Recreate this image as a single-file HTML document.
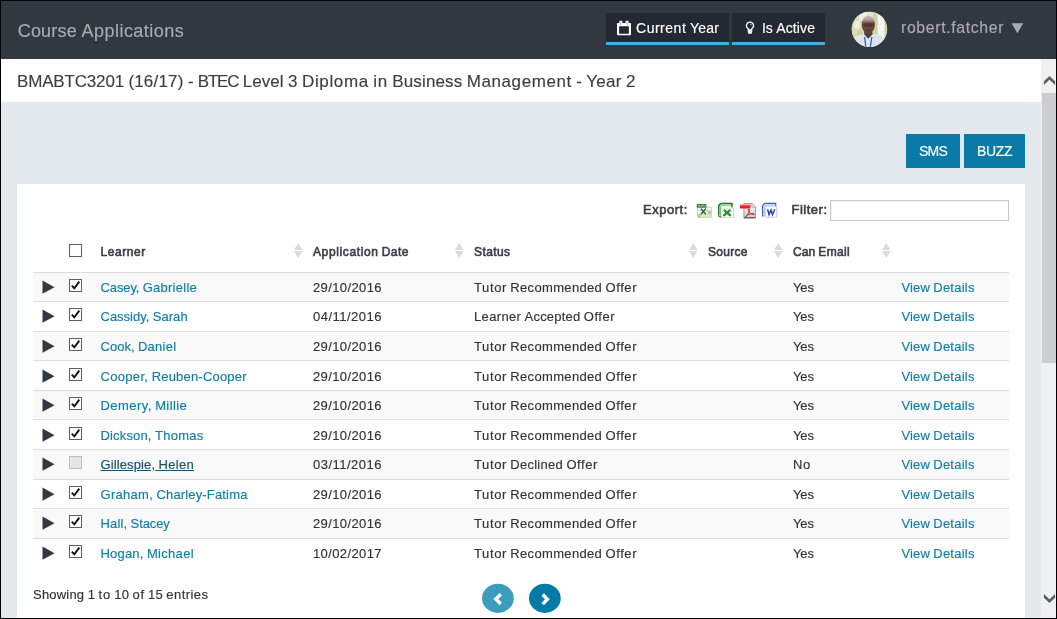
<!DOCTYPE html>
<html lang="en">
<head>
<meta charset="utf-8">
<title>Course Applications</title>
<style>
*{box-sizing:border-box;margin:0;padding:0}
html,body{width:1057px;height:619px;overflow:hidden;background:#e4e9ed}
body{position:relative;font-family:"Liberation Sans", sans-serif;font-size:13px;color:#333;}
#app{position:absolute;left:0;top:0;width:1057px;height:619px;overflow:hidden;will-change:transform}
.abs{position:absolute}
.t{position:absolute;white-space:nowrap;line-height:20px;height:20px;-webkit-text-stroke:0.15px}
#hdr{left:0;top:0;width:1057px;height:59px;background:#323840}
#band{left:0;top:59px;width:1041px;height:43px;background:#fff}
#card{left:17px;top:184px;width:1008px;height:440px;background:#fff}
#sb{left:1041px;top:59px;width:15px;height:560px;background:#f0f0f0}
#thumb{left:1042px;top:93px;width:14px;height:270px;background:#cdcdcd}
.frame{background:#000}
.hbtn{top:13px;height:32px;background:#232933;border-bottom:3px solid #38b0e2}
.btn{top:134px;height:34px;background:#0a7ba7}
.white{color:#fff}
.b{font-weight:400;-webkit-text-stroke:0.6px}
.row{left:33px;width:976px;border-top:1px solid #ddd}
.odd{background:#f9f9f9}
.lnk{color:#0f7ea8}
.cb{left:69px;width:13px;height:13px;border:1px solid #5f5f5f;background:#fff}
.tri{left:42px;width:0;height:0;border-left:12px solid #303843;border-top:6.6px solid transparent;border-bottom:6.6px solid transparent}
</style>
</head>
<body>
<div id="app">
<div id="hdr" class="abs"></div>
<div id="band" class="abs"></div>
<div id="card" class="abs"></div>
<div id="sb" class="abs"></div>
<div id="thumb" class="abs"></div>
<div class="abs hbtn" style="left:606px;width:123px"></div>
<div class="abs hbtn" style="left:732px;width:93px"></div>
<svg class="abs" style="left:1010px;top:22px" width="15" height="13" viewBox="1010 22 15 13"><path d="M1011.5 23.2H1023.3L1017.4 33.3z" fill="#a9abad"/></svg>
<svg class="abs" style="left:851px;top:11px" width="37" height="37" viewBox="0 0 37 37"><defs><clipPath id="av"><circle cx="18.45" cy="18.35" r="17.7"/></clipPath><linearGradient id="hd" x1="0" y1="0" x2="0" y2="1"><stop offset="0" stop-color="#cfc4c2"/><stop offset="0.22" stop-color="#b3a19d"/><stop offset="0.42" stop-color="#6e4f45"/><stop offset="1" stop-color="#62443a"/></linearGradient><filter id="bl" x="-20%" y="-20%" width="140%" height="140%"><feGaussianBlur stdDeviation="0.7"/></filter><filter id="bl2" x="-20%" y="-20%" width="140%" height="140%"><feGaussianBlur stdDeviation="0.35"/></filter></defs><g clip-path="url(#av)"><rect width="37" height="37" fill="#e4e6cc"/><g filter="url(#bl)"><rect x="-2" y="-2" width="14" height="30" fill="#dadeb4"/><ellipse cx="6" cy="14" rx="3" ry="4" fill="#eef0dc"/><ellipse cx="9" cy="22" rx="3" ry="3" fill="#c9d19c"/><rect x="8" y="-2" width="8" height="12" fill="#f1f0e6"/><rect x="22" y="-2" width="5" height="30" fill="#ccd3a4"/><rect x="26.6" y="-2" width="7" height="41" fill="#f4f4f4"/><rect x="33.6" y="-2" width="5" height="41" fill="#cdd4a0"/><path d="M-2 39V30C3 26 9 24 12 23L25 23C29 24 34 27 39 31V39z" fill="#dfe3ee"/><path d="M13 23L17.200 27.800 21.800 23 21 20 13.500 20z" fill="#4a3d44"/><ellipse cx="17.300" cy="13.600" rx="6.700" ry="9.200" fill="url(#hd)"/><ellipse cx="17.500" cy="14" rx="5.400" ry="1.900" fill="#432a25" opacity="0.6"/><ellipse cx="17.600" cy="19.600" rx="2.400" ry="1" fill="#5a2f2c" opacity="0.7"/></g><g filter="url(#bl2)"><path d="M13.6 26L15 37M20.8 26L19.2 37" stroke="#2a62c8" stroke-width="1.3" fill="none"/></g></g></svg>
<svg class="abs" style="left:617px;top:20px" width="14" height="16" viewBox="0 0 14 16"><path fill-rule="evenodd" d="M0.8 2.9h12.4a.8.8 0 0 1 .8.8v10.7a.8.8 0 0 1-.8.8H.8a.8.8 0 0 1-.8-.8V3.7a.8.8 0 0 1 .8-.8zM2.1 6.2v7.5h9.8V6.2z" fill="#fff"/><rect x="2.3" y="0.8" width="3.1" height="3" rx="1" fill="#fff"/><rect x="8.5" y="0.8" width="3.1" height="3" rx="1" fill="#fff"/><rect x="3.1" y="2.4" width="1.5" height="2.4" fill="#b4b6b9"/><rect x="9.3" y="2.4" width="1.5" height="2.4" fill="#b4b6b9"/></svg>
<svg class="abs" style="left:745px;top:21px" width="10" height="14" viewBox="0 0 10 14"><path d="M5 1.1a3.5 3.5 0 0 0-2 6.4c.4.4.6.9.6 1.4h2.8c0-.5.2-1 .6-1.4A3.5 3.5 0 0 0 5 1.100z" fill="none" stroke="#fff" stroke-width="1.25"/><path d="M2.7 8.4h4.6v2.6a2.3 2.0 0 0 1-4.6 0z" fill="#fff"/><path d="M5.2 3.1a1.7 1.7 0 0 1 1.5 1.3" fill="none" stroke="#fff" stroke-width="0.7"/></svg>
<div class="abs btn" style="left:906px;width:54px"></div>
<div class="abs btn" style="left:964px;width:61px"></div>
<div class="abs" style="left:830px;top:200px;width:179px;height:21px;border:1px solid #c8c8c8;background:#fff;box-shadow:inset 1px 1px 0 #f3f3f3"></div>
<svg class="abs" style="left:696px;top:202px" width="17" height="17" viewBox="0 0 17 17"><rect x="1.7" y="5.3" width="13.6" height="10.2" fill="#fbfdf8" stroke="#a9cc9a" stroke-width="0.7"/><path d="M1.7 8.7h13.6M1.7 12h13.6M5 5.3v10.2M11.2 5.300v10.200" stroke="#b9d9ab" stroke-width="0.7"/><rect x="11.5" y="8.9" width="3.5" height="2.8" fill="#a5d092"/><rect x="11.5" y="12.300" width="3.5" height="2.800" fill="#cfe6c4"/><rect x="2" y="12.3" width="2.8" height="2.8" fill="#a5d092"/><rect x="5.300" y="12.300" width="5.600" height="2.800" fill="#d9ecd0"/><rect x="0.8" y="2.200" width="9.600" height="3.300" fill="#1d4f16"/><path d="M1.800 3.100h2.200v1.500h-2.200zM4.600 3.100h2.200v1.500h-2.200zM7.400 3.100h2.200v1.500h-2.200z" fill="#e9f3e4"/><path d="M2.400 3.600h1M5.200 3.600h1M8 3.600h1" stroke="#1d4f16" stroke-width="0.700"/><path d="M5 6.600L9.800 12.400M9.800 6.600L5 12.400" stroke="#1f5c18" stroke-width="1.400"/></svg>
<svg class="abs" style="left:718px;top:202px" width="17" height="17" viewBox="0 0 17 17"><path d="M0.700 13.600V5.200Q0.700 1.500 4.400 1.500H13.900V5.400" fill="#fff" stroke="#1f7a22" stroke-width="1.500"/><path d="M0.700 13.600Q0.700 14.800 2.200 14.800H4" fill="none" stroke="#1f7a22" stroke-width="1.200"/><path d="M2.400 14V5.700Q2.400 3.200 5 3.200H13" fill="none" stroke="#7cc47c" stroke-width="1.100"/><rect x="4.300" y="6.900" width="11.800" height="9" fill="#cfcfcf"/><rect x="3.600" y="6.300" width="11.800" height="9" fill="#fff" stroke="#c7e0c4" stroke-width="0.600"/><path d="M5.800 7.800L12.800 13.800M12.400 7.800L5.400 13.800" stroke="#2e8b2c" stroke-width="2.200"/></svg>
<svg class="abs" style="left:740px;top:202px" width="17" height="17" viewBox="0 0 17 17"><defs><linearGradient id="pg" x1="0" y1="0" x2="0" y2="1"><stop offset="0" stop-color="#fdfdfd"/><stop offset="1" stop-color="#c9c9c9"/></linearGradient></defs><path d="M3.9 1.5h8l3.6 3.6v11h-11.600z" fill="url(#pg)" stroke="#8a8a8a" stroke-width="0.8"/><path d="M11.9 1.5v3.600h3.600z" fill="#eee" stroke="#8a8a8a" stroke-width="0.6"/><rect x="3.9" y="15.2" width="11.6" height="1" fill="#555"/><rect x="0" y="2.8" width="10.400" height="3.700" fill="#ee1c24"/><rect x="0" y="2.8" width="10.400" height="1.2" fill="#f8575c"/><path d="M6 14.300C8.300 12.300 9.800 9.300 9.300 7.300C8.800 6.300 8 7.300 8.500 8.800C9.300 11 11.500 12.800 13.800 12.600C15 12.300 14 11.300 12.300 11.500C10 11.700 7.500 12.800 6 14.300C5 15.200 5.400 14.700 6 14.300z" fill="none" stroke="#d8232a" stroke-width="1"/></svg>
<svg class="abs" style="left:762px;top:202px" width="17" height="17" viewBox="0 0 17 17"><path d="M0.6 14.400V5.200Q0.600 1.400 4.400 1.400H13.600V4.600" fill="#fff" stroke="#3a5fb4" stroke-width="1.300"/><path d="M2.300 14.400V5.600Q2.300 3 5 3H13.600" fill="none" stroke="#9db4e4" stroke-width="1"/><rect x="4.200" y="5.200" width="11.200" height="10.400" fill="#d4d4d8"/><rect x="3.500" y="4.600" width="11.200" height="10.400" fill="#fff" stroke="#b4c3e8" stroke-width="0.600"/><path d="M5.600 7.300L7 12.600 9.100 8 10.400 12.600 12.900 7.300" fill="none" stroke="#2747a8" stroke-width="1.500"/></svg>
<div class="abs cb" style="top:244px"></div>
<svg class="abs" style="left:294.1px;top:243px" width="8.6" height="16" viewBox="0 0 9 16" preserveAspectRatio="none"><path d="M0 7L4.5 0.1 9 7z" fill="#dbdbdb"/><path d="M0 7.9L4.5 14.9 9 7.9z" fill="#dbdbdb"/></svg>
<svg class="abs" style="left:455.4px;top:243px" width="8.6" height="16" viewBox="0 0 9 16" preserveAspectRatio="none"><path d="M0 7L4.5 0.1 9 7z" fill="#dbdbdb"/><path d="M0 7.9L4.5 14.9 9 7.9z" fill="#dbdbdb"/></svg>
<svg class="abs" style="left:689.1px;top:243px" width="8.6" height="16" viewBox="0 0 9 16" preserveAspectRatio="none"><path d="M0 7L4.5 0.1 9 7z" fill="#dbdbdb"/><path d="M0 7.9L4.5 14.9 9 7.9z" fill="#dbdbdb"/></svg>
<svg class="abs" style="left:774.2px;top:243px" width="8.6" height="16" viewBox="0 0 9 16" preserveAspectRatio="none"><path d="M0 7L4.5 0.1 9 7z" fill="#dbdbdb"/><path d="M0 7.9L4.5 14.9 9 7.9z" fill="#dbdbdb"/></svg>
<svg class="abs" style="left:882.3px;top:243px" width="8.6" height="16" viewBox="0 0 9 16" preserveAspectRatio="none"><path d="M0 7L4.5 0.1 9 7z" fill="#dbdbdb"/><path d="M0 7.9L4.5 14.9 9 7.9z" fill="#dbdbdb"/></svg>
<div class="abs row odd" style="top:272px;height:29px"></div>
<svg class="abs" style="left:40px;top:272px" width="18" height="29" viewBox="0 0 18 29"><path d="M2.5 8.60L14.5 15.20 2.5 21.80z" fill="#303843"/></svg>
<div class="abs cb" style="top:279px"><svg width="11" height="11" viewBox="0 0 11 11" style="display:block"><path d="M1.8 5.6L4.3 8.3 9.3 1.6" fill="none" stroke="#111" stroke-width="1.9"/></svg></div>
<div class="abs row " style="top:301px;height:30px"></div>
<svg class="abs" style="left:40px;top:301px" width="18" height="30" viewBox="0 0 18 30"><path d="M2.5 8.60L14.5 15.20 2.5 21.80z" fill="#303843"/></svg>
<div class="abs cb" style="top:308px"><svg width="11" height="11" viewBox="0 0 11 11" style="display:block"><path d="M1.8 5.6L4.3 8.3 9.3 1.6" fill="none" stroke="#111" stroke-width="1.9"/></svg></div>
<div class="abs row odd" style="top:331px;height:29px"></div>
<svg class="abs" style="left:40px;top:331px" width="18" height="29" viewBox="0 0 18 29"><path d="M2.5 8.60L14.5 15.20 2.5 21.80z" fill="#303843"/></svg>
<div class="abs cb" style="top:338px"><svg width="11" height="11" viewBox="0 0 11 11" style="display:block"><path d="M1.8 5.6L4.3 8.3 9.3 1.6" fill="none" stroke="#111" stroke-width="1.9"/></svg></div>
<div class="abs row " style="top:360px;height:30px"></div>
<svg class="abs" style="left:40px;top:360px" width="18" height="30" viewBox="0 0 18 30"><path d="M2.5 9.60L14.5 16.20 2.5 22.80z" fill="#303843"/></svg>
<div class="abs cb" style="top:368px"><svg width="11" height="11" viewBox="0 0 11 11" style="display:block"><path d="M1.8 5.6L4.3 8.3 9.3 1.6" fill="none" stroke="#111" stroke-width="1.9"/></svg></div>
<div class="abs row odd" style="top:390px;height:29px"></div>
<svg class="abs" style="left:40px;top:390px" width="18" height="29" viewBox="0 0 18 29"><path d="M2.5 8.60L14.5 15.20 2.5 21.80z" fill="#303843"/></svg>
<div class="abs cb" style="top:397px"><svg width="11" height="11" viewBox="0 0 11 11" style="display:block"><path d="M1.8 5.6L4.3 8.3 9.3 1.6" fill="none" stroke="#111" stroke-width="1.9"/></svg></div>
<div class="abs row " style="top:419px;height:30px"></div>
<svg class="abs" style="left:40px;top:419px" width="18" height="30" viewBox="0 0 18 30"><path d="M2.5 9.60L14.5 16.20 2.5 22.80z" fill="#303843"/></svg>
<div class="abs cb" style="top:427px"><svg width="11" height="11" viewBox="0 0 11 11" style="display:block"><path d="M1.8 5.6L4.3 8.3 9.3 1.6" fill="none" stroke="#111" stroke-width="1.9"/></svg></div>
<div class="abs row odd" style="top:449px;height:30px"></div>
<svg class="abs" style="left:40px;top:449px" width="18" height="30" viewBox="0 0 18 30"><path d="M2.5 8.60L14.5 15.20 2.5 21.80z" fill="#303843"/></svg>
<div class="abs cb" style="top:456px;background:#e6e6e6;border-color:#bdbdbd"></div>
<div class="abs row " style="top:479px;height:29px"></div>
<svg class="abs" style="left:40px;top:479px" width="18" height="29" viewBox="0 0 18 29"><path d="M2.5 8.60L14.5 15.20 2.5 21.80z" fill="#303843"/></svg>
<div class="abs cb" style="top:486px"><svg width="11" height="11" viewBox="0 0 11 11" style="display:block"><path d="M1.8 5.6L4.3 8.3 9.3 1.6" fill="none" stroke="#111" stroke-width="1.9"/></svg></div>
<div class="abs row odd" style="top:508px;height:30px"></div>
<svg class="abs" style="left:40px;top:508px" width="18" height="30" viewBox="0 0 18 30"><path d="M2.5 8.60L14.5 15.20 2.5 21.80z" fill="#303843"/></svg>
<div class="abs cb" style="top:515px"><svg width="11" height="11" viewBox="0 0 11 11" style="display:block"><path d="M1.8 5.6L4.3 8.3 9.3 1.6" fill="none" stroke="#111" stroke-width="1.9"/></svg></div>
<div class="abs row " style="top:538px;height:29px"></div>
<svg class="abs" style="left:40px;top:538px" width="18" height="29" viewBox="0 0 18 29"><path d="M2.5 8.60L14.5 15.20 2.5 21.80z" fill="#303843"/></svg>
<div class="abs cb" style="top:545px"><svg width="11" height="11" viewBox="0 0 11 11" style="display:block"><path d="M1.8 5.6L4.3 8.3 9.3 1.6" fill="none" stroke="#111" stroke-width="1.9"/></svg></div>
<svg class="abs" style="left:480px;top:582px" width="84" height="34" viewBox="480 582 84 34"><ellipse cx="497.9" cy="598.3" rx="15.9" ry="14.6" fill="#3d9cbc"/><ellipse cx="544.85" cy="598.3" rx="15.9" ry="14.6" fill="#047ba6"/></svg>
<svg class="abs" style="left:488px;top:590px" width="20" height="18" viewBox="488 590 20 18"><path d="M500.8 594.3L495.8 599.1 500.8 603.9" fill="none" stroke="#fff" stroke-width="3.4"/></svg>
<svg class="abs" style="left:535px;top:590px" width="20" height="18" viewBox="535 590 20 18"><path d="M542.7 594.5L547.4 599.3 542.7 604.1" fill="none" stroke="#fff" stroke-width="3.4"/></svg>
<svg class="abs" style="left:1041px;top:70px" width="15" height="20" viewBox="0 0 15 20"><path d="M8.45 5.95L14.1 11.2V15L8.45 9.700 2.900 15V11.200z" fill="#5f5f5f"/></svg>
<svg class="abs" style="left:1041px;top:590px" width="15" height="20" viewBox="0 0 15 20"><path d="M2.900 4V7.800L8.450 13 14.100 7.800V4L8.450 9.200z" fill="#5f5f5f"/></svg>
<div id="t0" class="t " style="left:17.7px;top:21.00px;font-size:18px;color:#a9abad;word-spacing:-0.344px;"><span style="letter-spacing:0.203px">Course</span> <span style="letter-spacing:0.456px">Applications</span></div>
<div id="t1" class="t " style="left:636px;top:18.00px;font-size:14px;color:#fff;word-spacing:-0.266px;"><span style="letter-spacing:0.516px">Current</span> <span style="letter-spacing:0.227px">Year</span></div>
<div id="t2" class="t " style="left:762px;top:18.00px;font-size:14px;color:#fff;word-spacing:-0.266px;"><span style="letter-spacing:-0.148px">Is</span> <span style="letter-spacing:0.133px">Active</span></div>
<div id="t3" class="t " style="left:901px;top:17.50px;font-size:15.8px;color:#a9abad;"><span style="letter-spacing:0.650px">robert.fatcher</span></div>
<div id="t4" class="t " style="left:17px;top:72.00px;font-size:17px;color:#3a3f47;word-spacing:-0.332px;"><span style="letter-spacing:-0.170px">BMABTC3201</span> <span style="letter-spacing:0.183px">(16/17)</span> <span style="letter-spacing:-0.203px">-</span> <span style="letter-spacing:-1.211px">BTEC</span> <span style="letter-spacing:0.022px">Level</span> <span style="letter-spacing:0.266px">3</span> <span style="letter-spacing:0.625px">Diploma</span> <span style="letter-spacing:0.750px">in</span> <span style="letter-spacing:0.127px">Business</span> <span style="letter-spacing:0.592px">Management</span> <span style="letter-spacing:-0.188px">-</span> <span style="letter-spacing:0.273px">Year</span> <span style="letter-spacing:0.266px">2</span></div>
<div id="t5" class="t " style="left:919px;top:141.00px;font-size:14px;color:#fff;"><span style="letter-spacing:-0.797px">SMS</span></div>
<div id="t6" class="t " style="left:977px;top:141.00px;font-size:14px;color:#fff;"><span style="letter-spacing:-0.320px">BUZZ</span></div>
<div id="t7" class="t b" style="left:643px;top:200.00px;font-size:13px;color:#3a3f47;"><span style="letter-spacing:0.511px">Export:</span></div>
<div id="t8" class="t b" style="left:791.5px;top:200.00px;font-size:13px;color:#3a3f47;"><span style="letter-spacing:0.498px">Filter:</span></div>
<div id="t9" class="t b" style="left:100.5px;top:242.20px;font-size:12px;color:#3a3f47;"><span style="letter-spacing:0.560px">Learner</span></div>
<div id="t10" class="t b" style="left:313px;top:242.20px;font-size:12px;color:#3a3f47;word-spacing:-0.219px;"><span style="letter-spacing:0.619px">Application</span> <span style="letter-spacing:0.516px">Date</span></div>
<div id="t11" class="t b" style="left:474px;top:242.20px;font-size:12px;color:#3a3f47;"><span style="letter-spacing:0.414px">Status</span></div>
<div id="t12" class="t b" style="left:708px;top:242.20px;font-size:12px;color:#3a3f47;"><span style="letter-spacing:0.263px">Source</span></div>
<div id="t13" class="t b" style="left:793px;top:242.20px;font-size:12px;color:#3a3f47;word-spacing:-0.250px;"><span style="letter-spacing:0.062px">Can</span> <span style="letter-spacing:0.359px">Email</span></div>
<div id="t14" class="t " style="left:100.5px;top:278.00px;font-size:13px;color:#0f7ea8;word-spacing:-0.266px;"><span style="letter-spacing:-0.117px">Casey,</span> <span style="letter-spacing:0.262px">Gabrielle</span></div>
<div id="t15" class="t " style="left:313px;top:278.00px;font-size:13px;color:#333;"><span style="letter-spacing:0.392px">29/10/2016</span></div>
<div id="t16" class="t " style="left:474px;top:278.00px;font-size:13px;color:#333;word-spacing:-0.258px;"><span style="letter-spacing:0.609px">Tutor</span> <span style="letter-spacing:0.342px">Recommended</span> <span style="letter-spacing:0.562px">Offer</span></div>
<div id="t17" class="t " style="left:793px;top:278.00px;font-size:13px;color:#333;"><span style="letter-spacing:-0.151px">Yes</span></div>
<div id="t18" class="t " style="left:901.5px;top:278.00px;font-size:13px;color:#0f7ea8;word-spacing:-0.250px;"><span style="letter-spacing:0.113px">View</span> <span style="letter-spacing:0.230px">Details</span></div>
<div id="t19" class="t " style="left:100.5px;top:307.00px;font-size:13px;color:#0f7ea8;word-spacing:-0.219px;">Cassidy, <span style="letter-spacing:0.034px">Sarah</span></div>
<div id="t20" class="t " style="left:313px;top:307.00px;font-size:13px;color:#333;"><span style="letter-spacing:0.489px">04/11/2016</span></div>
<div id="t21" class="t " style="left:474px;top:307.00px;font-size:13px;color:#333;word-spacing:-0.258px;"><span style="letter-spacing:0.344px">Learner</span> <span style="letter-spacing:0.201px">Accepted</span> <span style="letter-spacing:0.562px">Offer</span></div>
<div id="t22" class="t " style="left:793px;top:307.00px;font-size:13px;color:#333;"><span style="letter-spacing:-0.151px">Yes</span></div>
<div id="t23" class="t " style="left:901.5px;top:307.00px;font-size:13px;color:#0f7ea8;word-spacing:-0.250px;"><span style="letter-spacing:0.113px">View</span> <span style="letter-spacing:0.230px">Details</span></div>
<div id="t24" class="t " style="left:100.5px;top:337.00px;font-size:13px;color:#0f7ea8;word-spacing:-0.266px;"><span style="letter-spacing:0.013px">Cook,</span> <span style="letter-spacing:0.273px">Daniel</span></div>
<div id="t25" class="t " style="left:313px;top:337.00px;font-size:13px;color:#333;"><span style="letter-spacing:0.392px">29/10/2016</span></div>
<div id="t26" class="t " style="left:474px;top:337.00px;font-size:13px;color:#333;word-spacing:-0.258px;"><span style="letter-spacing:0.609px">Tutor</span> <span style="letter-spacing:0.342px">Recommended</span> <span style="letter-spacing:0.562px">Offer</span></div>
<div id="t27" class="t " style="left:793px;top:337.00px;font-size:13px;color:#333;"><span style="letter-spacing:-0.151px">Yes</span></div>
<div id="t28" class="t " style="left:901.5px;top:337.00px;font-size:13px;color:#0f7ea8;word-spacing:-0.250px;"><span style="letter-spacing:0.113px">View</span> <span style="letter-spacing:0.230px">Details</span></div>
<div id="t29" class="t " style="left:100.5px;top:366.50px;font-size:13px;color:#0f7ea8;word-spacing:-0.266px;"><span style="letter-spacing:0.317px">Cooper,</span> <span style="letter-spacing:0.201px">Reuben-Cooper</span></div>
<div id="t30" class="t " style="left:313px;top:366.50px;font-size:13px;color:#333;"><span style="letter-spacing:0.392px">29/10/2016</span></div>
<div id="t31" class="t " style="left:474px;top:366.50px;font-size:13px;color:#333;word-spacing:-0.258px;"><span style="letter-spacing:0.609px">Tutor</span> <span style="letter-spacing:0.342px">Recommended</span> <span style="letter-spacing:0.562px">Offer</span></div>
<div id="t32" class="t " style="left:793px;top:366.50px;font-size:13px;color:#333;"><span style="letter-spacing:-0.151px">Yes</span></div>
<div id="t33" class="t " style="left:901.5px;top:366.50px;font-size:13px;color:#0f7ea8;word-spacing:-0.250px;"><span style="letter-spacing:0.113px">View</span> <span style="letter-spacing:0.230px">Details</span></div>
<div id="t34" class="t " style="left:100.5px;top:396.00px;font-size:13px;color:#0f7ea8;word-spacing:-0.266px;"><span style="letter-spacing:0.444px">Demery,</span> <span style="letter-spacing:0.417px">Millie</span></div>
<div id="t35" class="t " style="left:313px;top:396.00px;font-size:13px;color:#333;"><span style="letter-spacing:0.392px">29/10/2016</span></div>
<div id="t36" class="t " style="left:474px;top:396.00px;font-size:13px;color:#333;word-spacing:-0.258px;"><span style="letter-spacing:0.609px">Tutor</span> <span style="letter-spacing:0.342px">Recommended</span> <span style="letter-spacing:0.562px">Offer</span></div>
<div id="t37" class="t " style="left:793px;top:396.00px;font-size:13px;color:#333;"><span style="letter-spacing:-0.151px">Yes</span></div>
<div id="t38" class="t " style="left:901.5px;top:396.00px;font-size:13px;color:#0f7ea8;word-spacing:-0.250px;"><span style="letter-spacing:0.113px">View</span> <span style="letter-spacing:0.230px">Details</span></div>
<div id="t39" class="t " style="left:100.5px;top:425.50px;font-size:13px;color:#0f7ea8;word-spacing:-0.250px;"><span style="letter-spacing:0.158px">Dickson,</span> <span style="letter-spacing:0.242px">Thomas</span></div>
<div id="t40" class="t " style="left:313px;top:425.50px;font-size:13px;color:#333;"><span style="letter-spacing:0.392px">29/10/2016</span></div>
<div id="t41" class="t " style="left:474px;top:425.50px;font-size:13px;color:#333;word-spacing:-0.258px;"><span style="letter-spacing:0.609px">Tutor</span> <span style="letter-spacing:0.342px">Recommended</span> <span style="letter-spacing:0.562px">Offer</span></div>
<div id="t42" class="t " style="left:793px;top:425.50px;font-size:13px;color:#333;"><span style="letter-spacing:-0.151px">Yes</span></div>
<div id="t43" class="t " style="left:901.5px;top:425.50px;font-size:13px;color:#0f7ea8;word-spacing:-0.250px;"><span style="letter-spacing:0.113px">View</span> <span style="letter-spacing:0.230px">Details</span></div>
<div id="t44" class="t " style="left:100.5px;top:455.00px;font-size:13px;color:#0b5573;word-spacing:-0.266px;text-decoration:underline"><span style="letter-spacing:0.123px">Gillespie,</span> <span style="letter-spacing:0.297px">Helen</span></div>
<div id="t45" class="t " style="left:313px;top:455.00px;font-size:13px;color:#333;"><span style="letter-spacing:0.489px">03/11/2016</span></div>
<div id="t46" class="t " style="left:474px;top:455.00px;font-size:13px;color:#333;word-spacing:-0.258px;"><span style="letter-spacing:0.609px">Tutor</span> <span style="letter-spacing:0.271px">Declined</span> <span style="letter-spacing:0.562px">Offer</span></div>
<div id="t47" class="t " style="left:793px;top:455.00px;font-size:13px;color:#333;"><span style="letter-spacing:0.492px">No</span></div>
<div id="t48" class="t " style="left:901.5px;top:455.00px;font-size:13px;color:#0f7ea8;word-spacing:-0.250px;"><span style="letter-spacing:0.113px">View</span> <span style="letter-spacing:0.230px">Details</span></div>
<div id="t49" class="t " style="left:100.5px;top:485.00px;font-size:13px;color:#0f7ea8;word-spacing:-0.266px;"><span style="letter-spacing:0.288px">Graham,</span> <span style="letter-spacing:0.158px">Charley-Fatima</span></div>
<div id="t50" class="t " style="left:313px;top:485.00px;font-size:13px;color:#333;"><span style="letter-spacing:0.392px">29/10/2016</span></div>
<div id="t51" class="t " style="left:474px;top:485.00px;font-size:13px;color:#333;word-spacing:-0.258px;"><span style="letter-spacing:0.609px">Tutor</span> <span style="letter-spacing:0.342px">Recommended</span> <span style="letter-spacing:0.562px">Offer</span></div>
<div id="t52" class="t " style="left:793px;top:485.00px;font-size:13px;color:#333;"><span style="letter-spacing:-0.151px">Yes</span></div>
<div id="t53" class="t " style="left:901.5px;top:485.00px;font-size:13px;color:#0f7ea8;word-spacing:-0.250px;"><span style="letter-spacing:0.113px">View</span> <span style="letter-spacing:0.230px">Details</span></div>
<div id="t54" class="t " style="left:100.5px;top:514.00px;font-size:13px;color:#0f7ea8;word-spacing:-0.266px;"><span style="letter-spacing:0.147px">Hall,</span> <span style="letter-spacing:-0.122px">Stacey</span></div>
<div id="t55" class="t " style="left:313px;top:514.00px;font-size:13px;color:#333;"><span style="letter-spacing:0.392px">29/10/2016</span></div>
<div id="t56" class="t " style="left:474px;top:514.00px;font-size:13px;color:#333;word-spacing:-0.258px;"><span style="letter-spacing:0.609px">Tutor</span> <span style="letter-spacing:0.342px">Recommended</span> <span style="letter-spacing:0.562px">Offer</span></div>
<div id="t57" class="t " style="left:793px;top:514.00px;font-size:13px;color:#333;"><span style="letter-spacing:-0.151px">Yes</span></div>
<div id="t58" class="t " style="left:901.5px;top:514.00px;font-size:13px;color:#0f7ea8;word-spacing:-0.250px;"><span style="letter-spacing:0.113px">View</span> <span style="letter-spacing:0.230px">Details</span></div>
<div id="t59" class="t " style="left:100.5px;top:544.00px;font-size:13px;color:#0f7ea8;word-spacing:-0.266px;"><span style="letter-spacing:0.185px">Hogan,</span> <span style="letter-spacing:0.315px">Michael</span></div>
<div id="t60" class="t " style="left:313px;top:544.00px;font-size:13px;color:#333;"><span style="letter-spacing:0.392px">10/02/2017</span></div>
<div id="t61" class="t " style="left:474px;top:544.00px;font-size:13px;color:#333;word-spacing:-0.258px;"><span style="letter-spacing:0.609px">Tutor</span> <span style="letter-spacing:0.342px">Recommended</span> <span style="letter-spacing:0.562px">Offer</span></div>
<div id="t62" class="t " style="left:793px;top:544.00px;font-size:13px;color:#333;"><span style="letter-spacing:-0.151px">Yes</span></div>
<div id="t63" class="t " style="left:901.5px;top:544.00px;font-size:13px;color:#0f7ea8;word-spacing:-0.250px;"><span style="letter-spacing:0.113px">View</span> <span style="letter-spacing:0.230px">Details</span></div>
<div id="t64" class="t " style="left:33px;top:585.00px;font-size:13px;color:#333;word-spacing:-0.253px;"><span style="letter-spacing:0.205px">Showing</span> <span style="letter-spacing:0.203px">1</span> <span style="letter-spacing:0.805px">to</span> <span style="letter-spacing:0.211px">10</span> <span style="letter-spacing:0.672px">of</span> <span style="letter-spacing:0.211px">15</span> <span style="letter-spacing:0.426px">entries</span></div>
<div class="abs frame" style="left:0;top:0;width:1057px;height:1px"></div>
<div class="abs frame" style="left:0;top:618px;width:1057px;height:1px"></div>
<div class="abs frame" style="left:0;top:0;width:1px;height:619px"></div>
<div class="abs frame" style="left:1056px;top:0;width:1px;height:619px"></div>
</div>
</body>
</html>
